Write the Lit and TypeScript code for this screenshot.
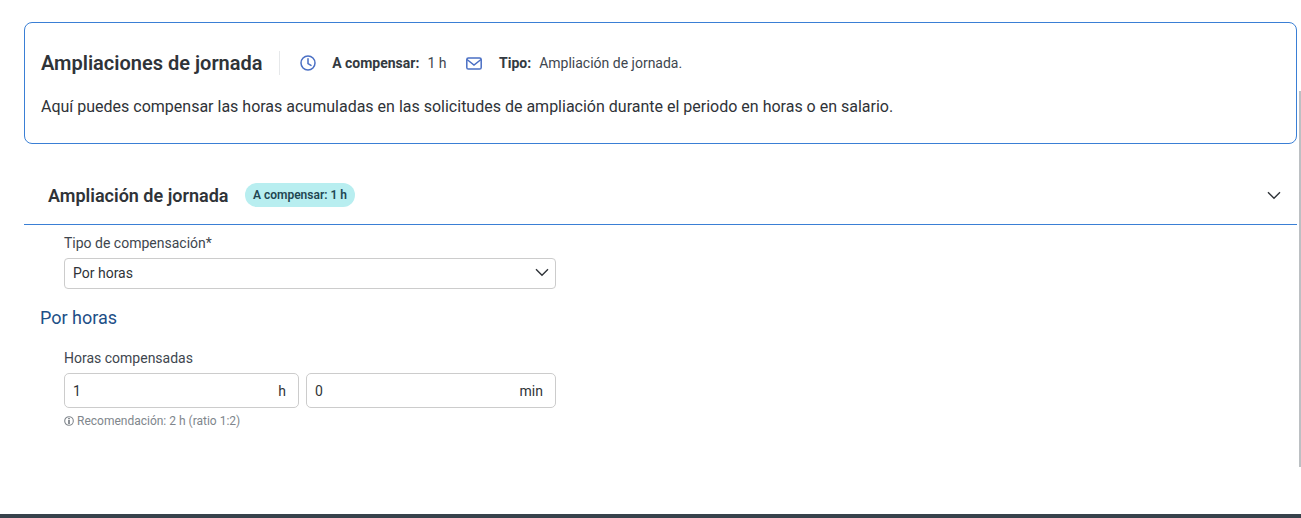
import { LitElement, html, css } from "lit";
import { customElement } from "lit/decorators.js";

@customElement("app-root")
export class AppRoot extends LitElement {
  static styles = css`
    :host { display: block; height: 518px; position: relative; overflow: hidden; background: #fff; font-family: Roboto, sans-serif; color: #333a41; font-size: 14px; }
    .page { height: 514px; box-sizing: border-box; padding: 22px 4px 0 24px; }
    .card { box-sizing: border-box; height: 122px; border: 1px solid #3a7fd5; border-radius: 8px; padding: 27px 16px 0; }
    .head { display: flex; align-items: center; height: 26px; }
    h1 { margin: 0; font-size: 20px; line-height: 26px; font-weight: 600; color: #2f3338; }
    .sep { width: 1px; height: 24px; background: #e6e8ea; margin: 0 20px 0 16px; }
    .meta { display: flex; align-items: center; font-size: 14px; }
    .meta svg { display: block; color: #4a6fc4; }
    .meta b { font-weight: 700; margin: 0 8px 0 16.6px; color: #333a41; }
    .val { color: #3e464e; }
    .gap { width: 20px; }
    .desc { margin: 21px 0 0; font-size: 16px; line-height: 20px; color: #2f3338; }
    .acc { display: flex; align-items: center; height: 81px; box-sizing: border-box; padding: 22px 16px 0 24px; border-bottom: 1px solid #3a7fd5; }
    h2 { margin: 0; font-size: 18px; font-weight: 600; color: #2f3338; }
    .badge { margin-left: 16.5px; height: 24px; line-height: 25px; padding: 0 8px; border-radius: 12px; background: #b8eef0; color: #1f4652; font-size: 12px; font-weight: 600; }
    .chev { margin-left: auto; display: block; color: #2f3338; }
    .form { padding: 10px 0 0 16px; }
    .field { width: 492px; margin-left: 24px; }
    label { display: block; font-size: 14px; line-height: 16px; color: #3e464e; }
    .select { display: flex; align-items: center; justify-content: space-between; box-sizing: border-box; height: 31px; margin-top: 7px; border: 1px solid #cccccc; border-radius: 4px; padding: 0 6px 2px 8px; color: #2f3338; }
    h3 { margin: 18px 0 0; font-size: 18px; line-height: 22px; font-weight: 400; color: #1d4f87; }
    .hours { margin-top: 21px; }
    .inputs { display: grid; grid-template-columns: 235px 1fr; gap: 7px; margin-top: 7px; }
    .input { display: flex; justify-content: space-between; align-items: center; box-sizing: border-box; height: 35px; border: 1px solid #cccccc; border-radius: 5px; padding: 0 12px 0 8px; color: #2f3338; }
    .hint { display: flex; align-items: center; gap: 3px; margin-top: 6px; font-size: 12px; line-height: 14px; color: #80868c; }
    .bar { position: absolute; left: 0; right: 0; bottom: 0; height: 4px; background: #37424b; }
    .scroll { position: absolute; right: 0; top: 91px; width: 2px; height: 376px; background: #bcc0c3; }
  `;

  render() {
    const chevron = (w: number) => html`<svg class="chev" width=${w} height="9" viewBox="0 0 14 9" fill="none" stroke="currentColor" stroke-width="1.4"><path d="M1 1.2 7 7.2 13 1.2"/></svg>`;
    return html`
      <div class="page">
        <section class="card">
          <div class="head">
            <h1>Ampliaciones de jornada</h1>
            <div class="sep"></div>
            <div class="meta">
              <svg width="16" height="16" viewBox="0 0 16 16" fill="none" stroke="currentColor" stroke-width="1.5"><circle cx="8" cy="8" r="7"/><path d="M8 3.8V8.6l3 1.8" stroke-linecap="round"/></svg>
              <b>A compensar:</b><span class="val">1 h</span>
            </div>
            <div class="gap"></div>
            <div class="meta">
              <svg width="16" height="13" viewBox="0 0 16 13" fill="none" stroke="currentColor" stroke-width="1.5"><rect x="0.8" y="1" width="14.4" height="11" rx="1.6"/><path d="M1 2.5 8 8l7-5.5"/></svg>
              <b>Tipo:</b><span class="val">Ampliación de jornada.</span>
            </div>
          </div>
          <p class="desc">Aquí puedes compensar las horas acumuladas en las solicitudes de ampliación durante el periodo en horas o en salario.</p>
        </section>
        <div class="acc">
          <h2>Ampliación de jornada</h2>
          <span class="badge">A compensar: 1 h</span>
          ${chevron(14)}
        </div>
        <div class="form">
          <div class="field">
            <label>Tipo de compensación*</label>
            <div class="select"><span>Por horas</span>${chevron(14)}</div>
          </div>
          <h3>Por horas</h3>
          <div class="field hours">
            <label>Horas compensadas</label>
            <div class="inputs">
              <div class="input"><span>1</span><span>h</span></div>
              <div class="input"><span>0</span><span>min</span></div>
            </div>
            <div class="hint">
              <svg width="10" height="10" viewBox="0 0 10 10" fill="none" stroke="currentColor"><circle cx="5" cy="5" r="4.3" stroke-width="1.1"/><path d="M5 2v1.2M5 4v4" stroke-width="1.8"/></svg>
              <span>Recomendación: 2 h (ratio 1:2)</span>
            </div>
          </div>
        </div>
      </div>
      <div class="scroll"></div>
      <div class="bar"></div>
    `;
  }
}
